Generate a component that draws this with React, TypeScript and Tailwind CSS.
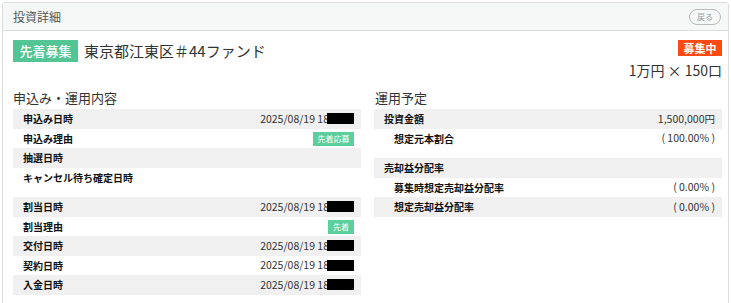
import React from "react";

const font = { fontFamily: '"Noto Sans CJK JP", "Noto Sans", sans-serif' };

type Row = { label: string; value?: React.ReactNode; indent?: boolean };

const Masked = () => (
  <span className="flex items-center">
    <span>2025/08/19 18</span>
    <span className="inline-block w-[27px] h-[11px] bg-black -ml-[2px]" />
  </span>
);

const SmallBadge = ({ text, w }: { text: string; w: string }) => (
  <span
    className={`inline-flex items-center justify-center h-[14px] ${w} bg-[#5ccf9d] text-white text-[8px] leading-none`}
  >
    {text}
  </span>
);

const Table = ({ rows }: { rows: Row[] }) => (
  <div>
    {rows.map((r, i) => (
      <div
        key={i}
        className={`flex items-center justify-between h-[19.5px] pr-[7px] ${
          i % 2 === 0 ? "bg-[#f0f0f0]" : "bg-white"
        } ${r.indent ? "pl-[20px]" : "pl-[10px]"}`}
      >
        <span className="text-[10px] font-bold text-[#111]">{r.label}</span>
        <span className="text-[10.5px] text-[#333]">{r.value}</span>
      </div>
    ))}
  </div>
);

export default function App() {
  return (
    <div className="bg-white w-[731px] h-[303px] overflow-hidden pt-[2px] pl-[2px]" style={font}>
      <div className="border border-[#dcdcdc] rounded-[3px] w-[727px] h-[320px]">
        <div className="h-[28px] bg-[#f6f7f7] border-b border-[#dcdcdc] flex items-center justify-between pl-[10px] pr-[7px]">
          <span className="text-[12px] text-[#555]">投資詳細</span>
          <span className="flex items-center justify-center w-[32px] h-[16px] rounded-full border border-[#bbb] text-[8px] text-[#999] leading-none">
            戻る
          </span>
        </div>
        <div className="pl-[10px] pr-[6px] pt-[9px]">
          <div className="flex justify-between">
            <div className="flex items-center gap-[6px] h-[22px]">
              <span className="flex items-center justify-center w-[65px] h-[22px] bg-[#53c493] text-white text-[13px] font-medium">
                先着募集
              </span>
              <span className="text-[15px] text-[#333]">東京都江東区＃44ファンド</span>
            </div>
            <div className="flex flex-col items-end">
              <span className="flex items-center justify-center w-[44px] h-[16px] bg-[#ff4b12] text-white text-[11px] font-bold leading-none">
                募集中
              </span>
              <span className="mt-[4px] text-[14px] leading-[20px] text-[#333]">1万円 × 150口</span>
            </div>
          </div>
          <div className="grid grid-cols-2 gap-[13px] mt-[8px]">
            <div>
              <div className="text-[13px] leading-[20px] text-[#333] mb-[1px]">申込み・運用内容</div>
              <Table
                rows={[
                  { label: "申込み日時", value: <Masked /> },
                  { label: "申込み理由", value: <SmallBadge text="先着応募" w="w-[41px]" /> },
                  { label: "抽選日時" },
                  { label: "キャンセル待ち確定日時" },
                ]}
              />
              <div className="mt-[10px]">
                <Table
                  rows={[
                    { label: "割当日時", value: <Masked /> },
                    { label: "割当理由", value: <SmallBadge text="先着" w="w-[26px]" /> },
                    { label: "交付日時", value: <Masked /> },
                    { label: "契約日時", value: <Masked /> },
                    { label: "入金日時", value: <Masked /> },
                  ]}
                />
              </div>
            </div>
            <div>
              <div className="text-[13px] leading-[20px] text-[#333] mb-[1px] pl-[1px]">運用予定</div>
              <Table
                rows={[
                  { label: "投資金額", value: "1,500,000円" },
                  { label: "想定元本割合", value: "( 100.00% )", indent: true },
                ]}
              />
              <div className="mt-[10px]">
                <Table
                  rows={[
                    { label: "売却益分配率" },
                    { label: "募集時想定売却益分配率", value: "( 0.00% )", indent: true },
                    { label: "想定売却益分配率", value: "( 0.00% )", indent: true },
                  ]}
                />
              </div>
            </div>
          </div>
        </div>
      </div>
    </div>
  );
}
